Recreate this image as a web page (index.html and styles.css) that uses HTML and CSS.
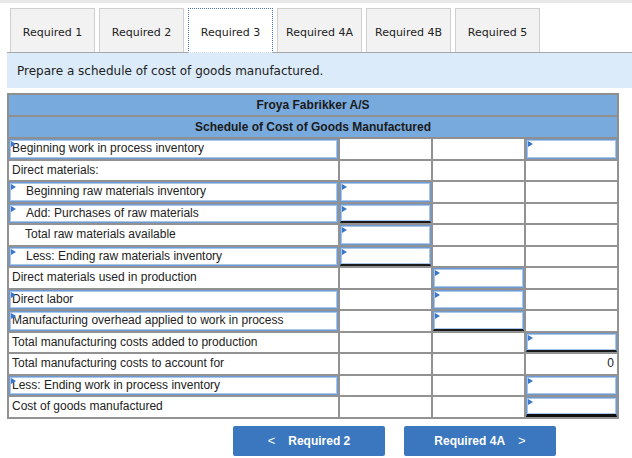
FILE: index.html
```html
<!DOCTYPE html>
<html lang="en">
<head>
    <meta charset="UTF-8">
    <title>Schedule of Cost of Goods Manufactured</title>
    <link rel="stylesheet" href="styles.css">
</head>
<body>
<div class="top-bar"></div>

<div class="tabs">
    <div class="tab">Required 1</div>
    <div class="tab">Required 2</div>
    <div class="tab active">Required 3</div>
    <div class="tab">Required 4A</div>
    <div class="tab">Required 4B</div>
    <div class="tab">Required 5</div>
</div>

<div class="instructions">Prepare a schedule of cost of goods manufactured.</div>

<table class="schedule">
    <colgroup>
        <col class="col-label">
        <col class="col-num">
        <col class="col-num">
        <col class="col-num">
    </colgroup>
    <tr class="head"><th colspan="4">Froya Fabrikker A/S</th></tr>
    <tr class="head"><th colspan="4">Schedule of Cost of Goods Manufactured</th></tr>
    <tr>
        <td><div class="field label">Beginning work in process inventory</div></td>
        <td></td><td></td>
        <td><div class="field"></div></td>
    </tr>
    <tr>
        <td><div class="text">Direct materials:</div></td>
        <td></td><td></td><td></td>
    </tr>
    <tr>
        <td><div class="field label indent">Beginning raw materials inventory</div></td>
        <td><div class="field"></div></td>
        <td></td><td></td>
    </tr>
    <tr>
        <td><div class="field label indent">Add: Purchases of raw materials</div></td>
        <td><div class="field total"></div></td>
        <td></td><td></td>
    </tr>
    <tr>
        <td><div class="text indent">Total raw materials available</div></td>
        <td><div class="field"></div></td>
        <td></td><td></td>
    </tr>
    <tr>
        <td><div class="field label indent">Less: Ending raw materials inventory</div></td>
        <td><div class="field total"></div></td>
        <td></td><td></td>
    </tr>
    <tr>
        <td><div class="text">Direct materials used in production</div></td>
        <td></td>
        <td><div class="field"></div></td>
        <td></td>
    </tr>
    <tr>
        <td><div class="field label">Direct labor</div></td>
        <td></td>
        <td><div class="field"></div></td>
        <td></td>
    </tr>
    <tr>
        <td><div class="field label">Manufacturing overhead applied to work in process</div></td>
        <td></td>
        <td><div class="field total"></div></td>
        <td></td>
    </tr>
    <tr>
        <td><div class="text">Total manufacturing costs added to production</div></td>
        <td></td><td></td>
        <td><div class="field total"></div></td>
    </tr>
    <tr>
        <td><div class="text">Total manufacturing costs to account for</div></td>
        <td></td><td></td>
        <td><div class="text amount">0</div></td>
    </tr>
    <tr>
        <td><div class="field label">Less: Ending work in process inventory</div></td>
        <td></td><td></td>
        <td><div class="field"></div></td>
    </tr>
    <tr>
        <td><div class="text">Cost of goods manufactured</div></td>
        <td></td><td></td>
        <td><div class="field grand"></div></td>
    </tr>
</table>

<div class="nav">
    <button class="nav-btn"><span class="chev">&lt;</span>Required 2</button>
    <button class="nav-btn">Required 4A<span class="chev right">&gt;</span></button>
</div>
</body>
</html>
```

FILE: styles.css
```css
/* page */
body {
    margin: 0;
    font-family: "Liberation Sans", Arial, sans-serif;
    color: #222;
    background: #fff;
}
.top-bar {
    height: 3px;
    background-color: #e8e8e8;
}

/* tabs */
.tabs {
    display: flex;
    align-items: flex-end;
    gap: 4px;
    margin: 5px 0 0 7px;
    padding-left: 3px;
    border-bottom: 1px solid #a8a8a8;
}
.tab {
    box-sizing: border-box;
    width: 85px;
    height: 44px;
    padding-top: 3px;
    border: 1px solid #cfcfcf;
    border-bottom: none;
    background-color: #f2f2f2;
    font-family: "DejaVu Sans", Verdana, sans-serif;
    font-size: 11px;
    display: flex;
    align-items: center;
    justify-content: center;
}
.tab.active {
    background-color: #fff;
    border: 1px dotted #3f72bd;
    border-bottom: 1px dotted #c9d8ee;
    height: 45px;
    margin-bottom: -1px;
}

/* instructions */
.instructions {
    margin-left: 7px;
    height: 35px;
    padding-left: 10px;
    background-color: #dcebf9;
    font-family: "DejaVu Sans", Verdana, sans-serif;
    font-size: 12px;
    display: flex;
    align-items: center;
}

/* schedule table */
.schedule {
    margin: 5px 0 0 7px;
    width: 612px;
    border-collapse: collapse;
    table-layout: fixed;
    font-size: 12px;
    border: 2px solid #9a9a9a;
}
.col-label {
    width: 331px;
}
.col-num {
    width: 93px;
}
.schedule th {
    background-color: #79aadd;
    font-weight: bold;
    height: 20px;
    padding: 0;
    border: 2px solid #8f8f8f;
    color: #1a1a1a;
}
.schedule td {
    height: 19.5px;
    padding: 0;
    border: 2px solid #929292;
    vertical-align: middle;
}
.text {
    padding: 0 3px;
    line-height: 19px;
    white-space: nowrap;
}
.indent {
    padding-left: 16px;
}
.amount {
    text-align: right;
}
.field {
    position: relative;
    box-sizing: border-box;
    height: 19.5px;
    border: 1px solid #6d9ad3;
    box-shadow: inset 0 0 0 1px #a9c5ea;
    line-height: 17px;
    white-space: nowrap;
}
.field::before {
    content: "";
    position: absolute;
    top: 1px;
    left: 1px;
    border-top: 3px solid transparent;
    border-bottom: 3px solid transparent;
    border-left: 5px solid #3b77c6;
}
.field.label {
    padding-left: 2px;
}
.field.label.indent {
    padding-left: 16px;
}
.field.total {
    border-bottom: 2px solid #1a1a1a;
}
.field.grand {
    border-bottom: 3px solid #111;
}

/* navigation */
.nav {
    display: flex;
    gap: 19px;
    margin: 7px 0 0 233px;
}
.nav-btn {
    width: 152px;
    height: 30px;
    border: none;
    border-radius: 2px;
    background-color: #3b77be;
    color: #fff;
    font-family: "Liberation Sans", Arial, sans-serif;
    font-size: 12px;
    font-weight: bold;
    display: flex;
    align-items: center;
    justify-content: center;
}
.chev {
    font-weight: normal;
    font-size: 13px;
    margin-right: 13px;
}
.chev.right {
    margin: 0 0 0 13px;
}
```
